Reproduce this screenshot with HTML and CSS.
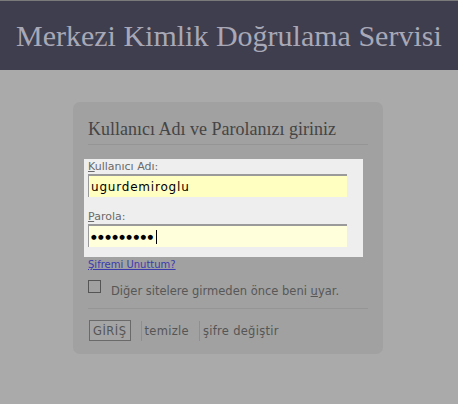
FILE: index.html
```html
<!DOCTYPE html>
<html lang="tr">
  <head>
    <meta charset="utf-8" />
    <title>Merkezi Kimlik Doğrulama Servisi</title>
    <link rel="stylesheet" href="styles.css">
  </head>
  <body>
    <div class="header">
      <h1>Merkezi Kimlik Doğrulama Servisi</h1>
    </div>
    <div class="main">
      <form class="login-box">
        <h2>Kullanıcı Adı ve Parolanızı giriniz</h2>
        <div class="fields">
          <label for="username"><u>K</u>ullanıcı Adı:</label>
          <input id="username" class="user" type="text" value="ugurdemiroglu" />
          <label for="password"><u>P</u>arola:</label>
          <div class="pass"><span class="dots">&#9679;&#9679;&#9679;&#9679;&#9679;&#9679;&#9679;&#9679;&#9679;</span><span class="caret"></span></div>
        </div>
        <a class="forgot" href="#">Şifremi Unuttum?</a>
        <div class="warn">
          <span class="check"></span>
          <span>Diğer sitelere girmeden önce beni <u>u</u>yar.</span>
        </div>
        <div class="actions">
          <button type="button" class="submit">GİRİŞ</button>
          <span class="sep"></span>
          <span class="act">temizle</span>
          <span class="sep"></span>
          <span class="act">şifre değiştir</span>
        </div>
      </form>
    </div>
  </body>
</html>
```

FILE: styles.css
```css
body {
  margin: 0;
  background: #aaaaaa;
  font-family: "DejaVu Sans", Verdana, sans-serif;
}

.header {
  border-top: 1px solid #7a7a7a;
  background: #3f3e4e;
  height: 69px;
}

h1 {
  margin: 0;
  padding: 18px 0 0 16px;
  font-family: "Liberation Serif", Georgia, serif;
  font-weight: normal;
  font-size: 30px;
  color: #a8a8b6;
  white-space: nowrap;
}

.main {
  padding: 32px 0 0 73px;
}

.login-box {
  width: 310px;
  height: 252px;
  box-sizing: border-box;
  background: #a1a1a1;
  border-radius: 7px;
  padding: 17px 15px 0 11px;
}

h2 {
  margin: 0 0 14px 4px;
  padding-bottom: 4px;
  border-bottom: 1px solid #959595;
  font-family: "Liberation Serif", Georgia, serif;
  font-weight: normal;
  font-size: 18px;
  color: #454545;
}

.fields {
  width: 279px;
  height: 98px;
  box-sizing: border-box;
  background: #eeeeee;
  padding: 1px 0 0 4px;
  font-size: 11px;
}

.fields label {
  display: block;
  color: #6a6a6a;
  height: 14px;
}

.fields input,
.pass {
  display: block;
  box-sizing: border-box;
  width: 259px;
  height: 23px;
  margin: 0 0 13px 0;
  border: 0;
  border-top: 2px solid #9a9a9a;
  border-left: 1px solid #9a9a9a;
  padding: 0 0 0 2px;
  font-family: "DejaVu Sans", Verdana, sans-serif;
  font-size: 12px;
  letter-spacing: 0.8px;
  color: #000;
}

.fields input.user {
  background: #ffffc2;
}

.pass {
  background: #ffffdc;
  display: flex;
  align-items: center;
  font-size: 6.5px;
  letter-spacing: 1.4px;
}

.caret {
  width: 1px;
  height: 14px;
  margin-left: 1px;
  background: #000;
}

.forgot {
  display: block;
  margin: 2px 0 0 4px;
  font-size: 10px;
  color: #3b3bae;
}

.warn {
  display: flex;
  align-items: flex-start;
  margin: 10px 0 0 4px;
  padding-bottom: 10px;
  border-bottom: 1px solid #959595;
  font-size: 11.5px;
  color: #575757;
}

.check {
  width: 11px;
  height: 11px;
  border: 1px solid #555555;
  margin-right: 10px;
}

.warn span:last-child {
  margin-top: 4px;
}

.actions {
  display: flex;
  align-items: center;
  margin: 11px 0 0 5px;
  font-size: 11.5px;
  color: #555555;
}

.submit {
  background: #a5a5a5;
  border: 1px solid #6a6a6a;
  font-family: "DejaVu Sans", Verdana, sans-serif;
  font-size: 11.5px;
  color: #555555;
  padding: 2px 3px;
  height: 21px;
  letter-spacing: 0.5px;
}

.sep {
  width: 1px;
  height: 20px;
  background: #8f8f8f;
  margin: 0 3px 0 10px;
}

.act {
  letter-spacing: 0.3px;
}
```
